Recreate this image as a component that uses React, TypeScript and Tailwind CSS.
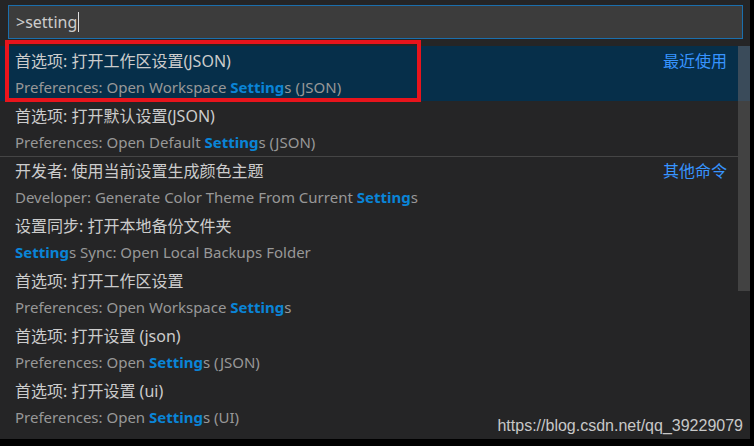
import React from "react";

type Item = {
  title: string;
  // description split in parts; highlighted parts are matched text
  desc: { text: string; hl?: boolean }[];
  label?: string;
  separatorBefore?: boolean;
};

const items: Item[] = [
  {
    title: "首选项: 打开工作区设置(JSON)",
    desc: [{ text: "Preferences: Open Workspace " }, { text: "Setting", hl: true }, { text: "s (JSON)" }],
    label: "最近使用",
  },
  {
    title: "首选项: 打开默认设置(JSON)",
    desc: [{ text: "Preferences: Open Default " }, { text: "Setting", hl: true }, { text: "s (JSON)" }],
  },
  {
    title: "开发者: 使用当前设置生成颜色主题",
    desc: [{ text: "Developer: Generate Color Theme From Current " }, { text: "Setting", hl: true }, { text: "s" }],
    label: "其他命令",
    separatorBefore: true,
  },
  {
    title: "设置同步: 打开本地备份文件夹",
    desc: [{ text: "Setting", hl: true }, { text: "s Sync: Open Local Backups Folder" }],
  },
  {
    title: "首选项: 打开工作区设置",
    desc: [{ text: "Preferences: Open Workspace " }, { text: "Setting", hl: true }, { text: "s" }],
  },
  {
    title: "首选项: 打开设置 (json)",
    desc: [{ text: "Preferences: Open " }, { text: "Setting", hl: true }, { text: "s (JSON)" }],
  },
  {
    title: "首选项: 打开设置 (ui)",
    desc: [{ text: "Preferences: Open " }, { text: "Setting", hl: true }, { text: "s (UI)" }],
  },
];

const font = { fontFamily: '"Segoe UI", "Noto Sans", "Noto Sans CJK SC", sans-serif' };

function Row({ item, selected }: { item: Item; selected: boolean }) {
  return (
    <div
      className={`relative flex h-[55px] flex-col justify-center pl-[15px] pr-[11px] ${
        selected ? "bg-[#062f4a]" : ""
      } ${item.separatorBefore ? "border-t border-[#454545]" : ""}`}
    >
      <div className="flex items-center justify-between leading-[20px]">
        <span className="text-[16px] text-[#cccccc]">{item.title}</span>
        {item.label && <span className="text-[16px] text-[#3794ff]">{item.label}</span>}
      </div>
      <div className="mt-[6px] text-[15px] leading-[20px] text-[#989898]">
        {item.desc.map((d, i) =>
          d.hl ? (
            <span key={i} className="font-bold text-[#0a84d6]">
              {d.text}
            </span>
          ) : (
            <span key={i}>{d.text}</span>
          )
        )}
      </div>
    </div>
  );
}

export default function App() {
  return (
    <div className="relative h-[446px] w-[754px] overflow-hidden bg-black" style={font}>
      <div className="flex h-[439px] w-[750px] flex-col bg-[#252526] pt-[5px]">
        <div className="mx-[8px] flex h-[34px] w-[735px] items-center border border-[#1b6fad] bg-[#3c3c3c] pl-[7px]">
          <span className="text-[16px] text-[#cccccc]">&gt;setting</span>
          <span className="ml-[1px] h-[20px] w-[1px] bg-[#dddddd]" />
        </div>
        <div className="mt-[7px] flex flex-1 overflow-hidden">
          <div className="flex w-[738px] flex-col">
            {items.map((item, i) => (
              <Row key={i} item={item} selected={i === 0} />
            ))}
          </div>
          <div className="flex w-[12px] flex-col">
            <div className="h-[55px] bg-[#3a4b5a]" />
            <div className="h-[190px] bg-[#424242]" />
          </div>
        </div>
      </div>

      {/* red annotation box */}
      <div className="absolute left-[5px] top-[40px] h-[62px] w-[416px] border-[4px] border-[#e8141c]" />

      {/* watermark */}
      <div
        className="absolute bottom-[8px] right-[11px] text-[16px] text-[#c8c8c8]"
        style={{ fontFamily: '"Liberation Sans", Arial, sans-serif' }}
      >
        https://blog.csdn.net/qq_39229079
      </div>
    </div>
  );
}
